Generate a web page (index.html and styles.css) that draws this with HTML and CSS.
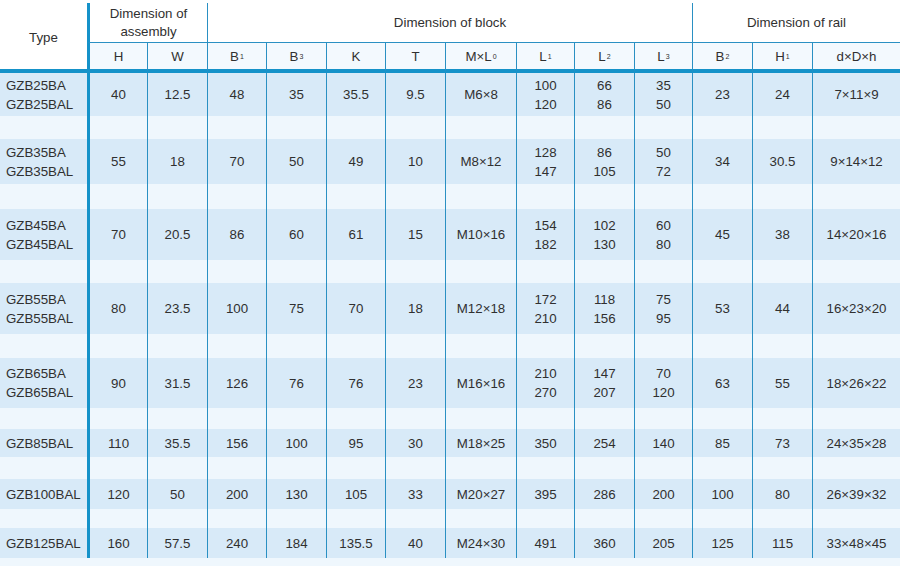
FILE: index.html
```html
<!DOCTYPE html>
<html>
<head>
<meta charset="utf-8">
<link rel="stylesheet" href="styles.css">
</head>
<body>
<div class="page">
  <div class="grid">
    <div class="c h type">Type</div>
    <div class="c h grp thick asm">Dimension of<br>assembly</div>
    <div class="c h grp blk">Dimension of block</div>
    <div class="c h grp rail">Dimension of rail</div>

    <div class="c sh thick">H</div>
    <div class="c sh">W</div>
    <div class="c sh">B<sub>1</sub></div>
    <div class="c sh">B<sub>3</sub></div>
    <div class="c sh">K</div>
    <div class="c sh">T</div>
    <div class="c sh">M×L<sub>0</sub></div>
    <div class="c sh">L<sub>1</sub></div>
    <div class="c sh">L<sub>2</sub></div>
    <div class="c sh">L<sub>3</sub></div>
    <div class="c sh">B<sub>2</sub></div>
    <div class="c sh">H<sub>1</sub></div>
    <div class="c sh">d×D×h</div>

    <div class="row band">
      <div class="c name">GZB25BA<br>GZB25BAL</div><div class="c thick">40</div><div class="c">12.5</div><div class="c">48</div><div class="c">35</div><div class="c">35.5</div><div class="c">9.5</div><div class="c">M6×8</div><div class="c">100<br>120</div><div class="c">66<br>86</div><div class="c">35<br>50</div><div class="c">23</div><div class="c">24</div><div class="c">7×11×9</div>
    </div>
    <div class="row gap">
      <div class="c name"></div><div class="c thick"></div><div class="c"></div><div class="c"></div><div class="c"></div><div class="c"></div><div class="c"></div><div class="c"></div><div class="c"></div><div class="c"></div><div class="c"></div><div class="c"></div><div class="c"></div><div class="c"></div>
    </div>
    <div class="row band">
      <div class="c name">GZB35BA<br>GZB35BAL</div><div class="c thick">55</div><div class="c">18</div><div class="c">70</div><div class="c">50</div><div class="c">49</div><div class="c">10</div><div class="c">M8×12</div><div class="c">128<br>147</div><div class="c">86<br>105</div><div class="c">50<br>72</div><div class="c">34</div><div class="c">30.5</div><div class="c">9×14×12</div>
    </div>
    <div class="row gap">
      <div class="c name"></div><div class="c thick"></div><div class="c"></div><div class="c"></div><div class="c"></div><div class="c"></div><div class="c"></div><div class="c"></div><div class="c"></div><div class="c"></div><div class="c"></div><div class="c"></div><div class="c"></div><div class="c"></div>
    </div>
    <div class="row band">
      <div class="c name">GZB45BA<br>GZB45BAL</div><div class="c thick">70</div><div class="c">20.5</div><div class="c">86</div><div class="c">60</div><div class="c">61</div><div class="c">15</div><div class="c">M10×16</div><div class="c">154<br>182</div><div class="c">102<br>130</div><div class="c">60<br>80</div><div class="c">45</div><div class="c">38</div><div class="c">14×20×16</div>
    </div>
    <div class="row gap">
      <div class="c name"></div><div class="c thick"></div><div class="c"></div><div class="c"></div><div class="c"></div><div class="c"></div><div class="c"></div><div class="c"></div><div class="c"></div><div class="c"></div><div class="c"></div><div class="c"></div><div class="c"></div><div class="c"></div>
    </div>
    <div class="row band">
      <div class="c name">GZB55BA<br>GZB55BAL</div><div class="c thick">80</div><div class="c">23.5</div><div class="c">100</div><div class="c">75</div><div class="c">70</div><div class="c">18</div><div class="c">M12×18</div><div class="c">172<br>210</div><div class="c">118<br>156</div><div class="c">75<br>95</div><div class="c">53</div><div class="c">44</div><div class="c">16×23×20</div>
    </div>
    <div class="row gap">
      <div class="c name"></div><div class="c thick"></div><div class="c"></div><div class="c"></div><div class="c"></div><div class="c"></div><div class="c"></div><div class="c"></div><div class="c"></div><div class="c"></div><div class="c"></div><div class="c"></div><div class="c"></div><div class="c"></div>
    </div>
    <div class="row band">
      <div class="c name">GZB65BA<br>GZB65BAL</div><div class="c thick">90</div><div class="c">31.5</div><div class="c">126</div><div class="c">76</div><div class="c">76</div><div class="c">23</div><div class="c">M16×16</div><div class="c">210<br>270</div><div class="c">147<br>207</div><div class="c">70<br>120</div><div class="c">63</div><div class="c">55</div><div class="c">18×26×22</div>
    </div>
    <div class="row gap">
      <div class="c name"></div><div class="c thick"></div><div class="c"></div><div class="c"></div><div class="c"></div><div class="c"></div><div class="c"></div><div class="c"></div><div class="c"></div><div class="c"></div><div class="c"></div><div class="c"></div><div class="c"></div><div class="c"></div>
    </div>
    <div class="row band">
      <div class="c name">GZB85BAL</div><div class="c thick">110</div><div class="c">35.5</div><div class="c">156</div><div class="c">100</div><div class="c">95</div><div class="c">30</div><div class="c">M18×25</div><div class="c">350</div><div class="c">254</div><div class="c">140</div><div class="c">85</div><div class="c">73</div><div class="c">24×35×28</div>
    </div>
    <div class="row gap">
      <div class="c name"></div><div class="c thick"></div><div class="c"></div><div class="c"></div><div class="c"></div><div class="c"></div><div class="c"></div><div class="c"></div><div class="c"></div><div class="c"></div><div class="c"></div><div class="c"></div><div class="c"></div><div class="c"></div>
    </div>
    <div class="row band">
      <div class="c name">GZB100BAL</div><div class="c thick">120</div><div class="c">50</div><div class="c">200</div><div class="c">130</div><div class="c">105</div><div class="c">33</div><div class="c">M20×27</div><div class="c">395</div><div class="c">286</div><div class="c">200</div><div class="c">100</div><div class="c">80</div><div class="c">26×39×32</div>
    </div>
    <div class="row gap">
      <div class="c name"></div><div class="c thick"></div><div class="c"></div><div class="c"></div><div class="c"></div><div class="c"></div><div class="c"></div><div class="c"></div><div class="c"></div><div class="c"></div><div class="c"></div><div class="c"></div><div class="c"></div><div class="c"></div>
    </div>
    <div class="row band">
      <div class="c name">GZB125BAL</div><div class="c thick">160</div><div class="c">57.5</div><div class="c">240</div><div class="c">184</div><div class="c">135.5</div><div class="c">40</div><div class="c">M24×30</div><div class="c">491</div><div class="c">360</div><div class="c">205</div><div class="c">125</div><div class="c">115</div><div class="c">33×48×45</div>
    </div>
  </div>
  <div class="tail"></div>
</div>
</body>
</html>
```

FILE: styles.css
```css
html, body {
  margin: 0;
  padding: 0;
  background: #ffffff;
}

.page {
  width: 900px;
  height: 566px;
  padding-top: 3px;
  box-sizing: border-box;
  font-family: "Liberation Sans", Arial, sans-serif;
  font-size: 13.3px;
  color: #303030;
  overflow: hidden;
}

.grid {
  display: grid;
  grid-template-columns: 87px 60px 60px 59px 60px 59px 60px 71px 58px 60px 58px 60px 60px 88px;
  grid-template-rows: 40px 30px 43px 23px 45px 25px 51px 23px 51px 24px 50px 21px 28px 22px 30px 19px 30px;
}

.row {
  display: contents;
}

.c {
  box-sizing: border-box;
  display: flex;
  align-items: center;
  justify-content: center;
  text-align: center;
  line-height: 19px;
  border-left: 1px solid #2a90c3;
}

.c.thick {
  border-left: 3px solid #1592c9;
}

.c.name,
.c.type {
  border-left: none;
  justify-content: flex-start;
  text-align: left;
  padding-left: 6px;
}

.c.type {
  grid-row: 1 / span 2;
  grid-column: 1;
  justify-content: center;
  padding-left: 0;
  padding-top: 2px;
  background: #ffffff;
  border-bottom: 4px solid #1592c9;
}

.h.grp {
  border-bottom: 1px solid #2a90c3;
  background: #ffffff;
  line-height: 18px;
}

.asm {
  grid-column: 2 / span 2;
}

.blk {
  grid-column: 4 / span 8;
}

.rail {
  grid-column: 12 / span 3;
}

.sh {
  background: #f3f9fe;
  border-bottom: 4px solid #1592c9;
  padding-top: 1px;
}

sub {
  font-size: 7px;
  vertical-align: -1px;
  line-height: 0;
  margin-left: 1px;
}

.band .c {
  background: #d8eaf8;
}

.gap .c {
  background: #eff7fd;
}

.tail {
  height: 8px;
  background: #eff7fd;
}
```
